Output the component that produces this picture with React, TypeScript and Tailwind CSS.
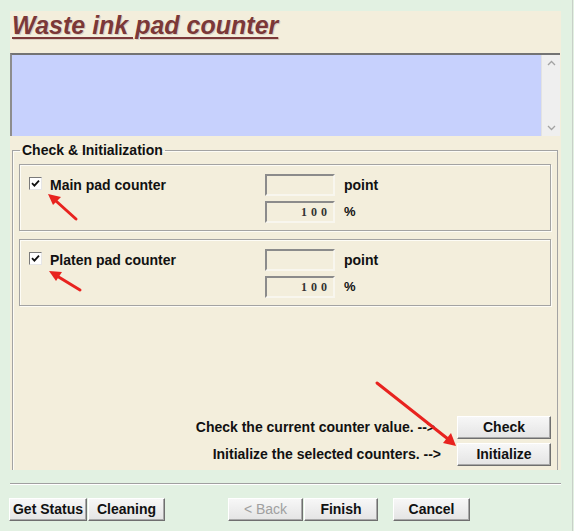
import React from "react";

const raised =
  "flex items-center justify-center h-[23px] bg-gradient-to-b from-[#f7f7f7] to-[#e4e4e4] border border-t-white border-l-white border-r-[#6f6f6f] border-b-[#6f6f6f] shadow-[inset_-1px_-1px_0_#a8a8a8] text-[14px] font-bold text-[#111]";

const CheckBox = () => (
  <span className="flex items-center justify-center w-[13px] h-[13px] bg-white border border-t-[#7a7a7a] border-l-[#7a7a7a] border-r-[#e6e6e6] border-b-[#e6e6e6]">
    <svg width="9" height="9" viewBox="0 0 9 9">
      <path d="M1 4.2 L3.4 6.6 L8 1.6" fill="none" stroke="#111" strokeWidth="1.8" />
    </svg>
  </span>
);

const Field = ({ value }: { value?: string }) => (
  <div className="flex items-center justify-end w-[70px] h-[22px] pr-[2px] bg-[#f3eedc] border-2 border-t-[#8b8b8b] border-l-[#8b8b8b] border-r-[#f8f6ee] border-b-[#f8f6ee] font-['Liberation_Serif'] font-bold text-[12px] tracking-[4px] text-[#333]">
    {value}
  </div>
);

const CounterBox = ({ label }: { label: string }) => (
  <div className="flex h-[67px] pl-[9px] pt-[9px] border border-[#a3a3a3] shadow-[inset_1px_1px_0_#fdfcf6,1px_1px_0_#fdfcf6]">
    <div className="flex items-center gap-[8px] w-[236px] h-[22px]">
      <span className="-mt-[3px]">
        <CheckBox />
      </span>
      <span className="text-[14px] font-bold text-[#111]">{label}</span>
    </div>
    <div className="flex flex-col gap-[5px]">
      <div className="flex items-center gap-[9px]">
        <Field />
        <span className="text-[14px] font-bold text-[#111]">point</span>
      </div>
      <div className="flex items-center gap-[9px]">
        <Field value="100" />
        <span className="text-[13px] font-bold text-[#111]">%</span>
      </div>
    </div>
  </div>
);

export default function App() {
  return (
    <div className="relative w-[574px] h-[531px] overflow-hidden bg-[#e2f1e2] font-['Liberation_Sans',Arial,sans-serif]">
      <div className="ml-[10px] pt-[11px]">
        <div className="flex flex-col w-[551px] h-[459px] bg-[#f3eedc]">
          <div className="h-[42px] pl-[2px]">
            <h1 className="text-[25px] leading-[28px] font-bold italic text-[#7b3838] underline decoration-2 underline-offset-[3px] [text-shadow:1px_1px_0_#d9cfc0]">
              Waste ink pad counter
            </h1>
          </div>

          <div className="flex w-[550px] h-[83px] bg-[#c7d1fd] border-t-2 border-l-2 border-t-[#737373] border-l-[#8d8d8d]">
            <div className="flex-1" />
            <div className="flex flex-col justify-between items-center w-[19px] py-[5px] bg-[#efefef] border-l border-[#e2e2e2]">
              <svg width="9" height="6" viewBox="0 0 9 6">
                <path d="M1 5 L4.5 1.5 L8 5" fill="none" stroke="#a3a3a3" strokeWidth="1.3" />
              </svg>
              <svg width="9" height="6" viewBox="0 0 9 6">
                <path d="M1 1 L4.5 4.5 L8 1" fill="none" stroke="#a3a3a3" strokeWidth="1.3" />
              </svg>
            </div>
          </div>

          <fieldset className="flex flex-col flex-1 mt-[6px] ml-[2px] w-[546px] px-[6px] pb-[4px] border border-b-0 border-[#a3a3a3] shadow-[inset_1px_1px_0_#fdfcf6]">
            <legend className="ml-[1px] px-[2px] text-[14px] leading-[16px] font-bold text-[#111]">
              Check &amp; Initialization
            </legend>
            <div className="flex flex-col gap-[8px] mt-[6px]">
              <CounterBox label="Main pad counter" />
              <CounterBox label="Platen pad counter" />
            </div>
            <div className="flex flex-col gap-[4px] mt-auto">
              <div className="flex items-center justify-end gap-[22px]">
                <span className="text-[14px] font-bold text-[#111]">Check the current counter value. --&gt;</span>
                <button className={raised + " w-[94px]"}>Check</button>
              </div>
              <div className="flex items-center justify-end gap-[16px]">
                <span className="text-[14px] font-bold text-[#111]">Initialize the selected counters. --&gt;</span>
                <button className={raised + " w-[94px]"}>Initialize</button>
              </div>
            </div>
          </fieldset>
        </div>
        <div className="mt-[13px] w-[551px] h-[2px] border-t border-[#a0a0a0] border-b border-b-white" />
      </div>

      <div className="flex items-center mt-[13px] ml-[9px]">
        <button className={raised + " w-[78px]"}>Get Status</button>
        <button className={raised + " w-[77px] ml-[1px]"}>Cleaning</button>
        <button className={raised + " w-[75px] ml-[63px] text-[#a0a0a0] font-normal"}>&lt; Back</button>
        <button className={raised + " w-[74px] ml-[1px]"}>Finish</button>
        <button className={raised + " w-[77px] ml-[15px]"}>Cancel</button>
      </div>

      <div className="absolute top-0 right-[1px] w-px h-[531px] bg-[#c8d0c8]" />

      <svg className="absolute inset-0 pointer-events-none" width="574" height="531" viewBox="0 0 574 531">
        <g stroke="#e8231f" strokeWidth="3" strokeLinecap="round" fill="#e8231f">
          <line x1="76" y1="219" x2="56" y2="201" />
          <line x1="80" y1="290" x2="57" y2="276" />
          <line x1="377" y1="383" x2="448" y2="439" />
        </g>
        <g fill="#e8231f">
          <polygon points="48,194 61,197 53,205" />
          <polygon points="49,271 62,272 56,281" />
          <polygon points="456,446 443,443 451,433" />
        </g>
      </svg>
    </div>
  );
}
